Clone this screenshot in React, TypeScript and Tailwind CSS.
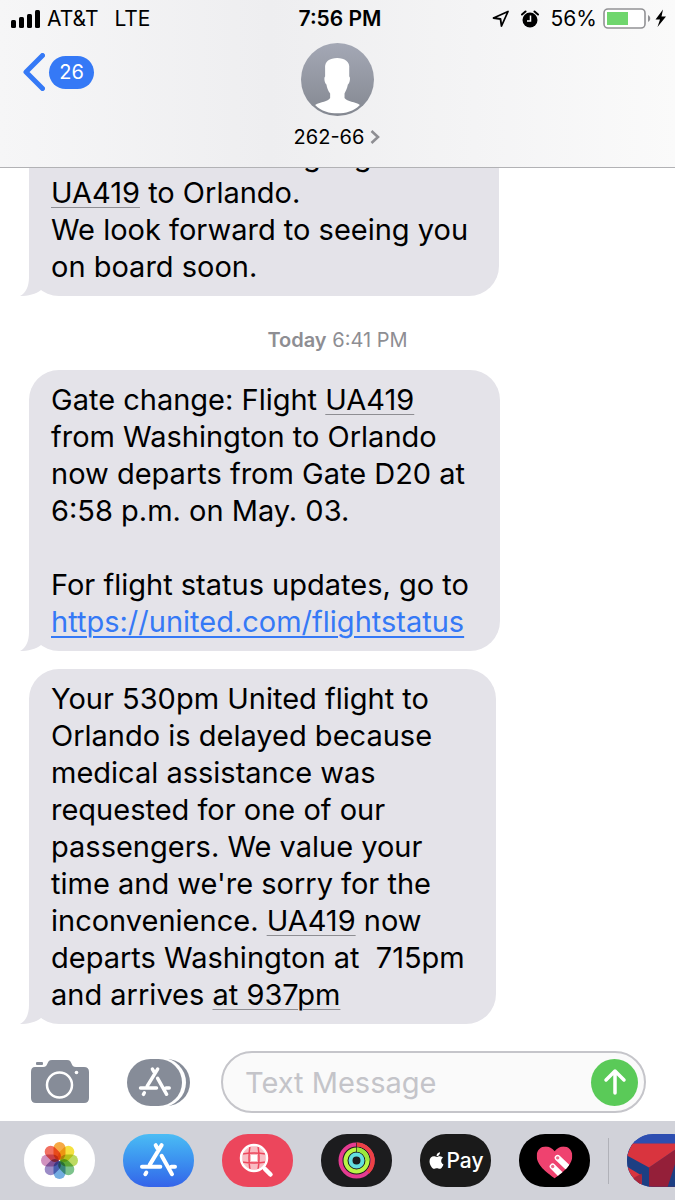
import type { ReactNode } from "react";
import { FaApple } from "react-icons/fa";

const petals = [
  "#f59a23",
  "#f3dc1f",
  "#b0d346",
  "#66b978",
  "#5b9fdc",
  "#8a78bd",
  "#c97fb4",
  "#ee5745",
];

function StatusBar() {
  return (
    <div className="grid h-[37px] grid-cols-[1fr_auto_1fr] items-center pr-1.5 pl-[11px] text-[21px] leading-6">
      <div className="flex items-center">
        <svg width="30" height="18" viewBox="0 0 30 18" aria-hidden="true">
          <rect x="0" y="10" width="5" height="8" rx="1.5" />
          <rect x="8" y="7" width="5" height="11" rx="1.5" />
          <rect x="16" y="4" width="5" height="14" rx="1.5" />
          <rect x="24" y="0" width="5" height="18" rx="1.5" />
        </svg>
        <span className="ml-1.5">AT&amp;T</span>
        <span className="ml-4">LTE</span>
      </div>
      <div className="font-semibold">7:56 PM</div>
      <div className="flex items-center justify-end">
        <svg width="18" height="18" viewBox="0 0 18 18" aria-hidden="true">
          <path
            d="M1.5 8 16 1.5 9.5 16 8.5 9Z"
            fill="none"
            stroke="black"
            strokeWidth="1.8"
            strokeLinejoin="round"
          />
        </svg>
        <svg
          className="ml-[11px]"
          width="18"
          height="18"
          viewBox="0 0 18 18"
          aria-hidden="true"
        >
          <circle cx="9" cy="10" r="7.5" />
          <path
            d="M1 4.500 4.500 1.500M17 4.500 13.500 1.500"
            stroke="black"
            strokeWidth="2"
            strokeLinecap="round"
          />
          <path d="M9.5 5.5V11H6" fill="none" stroke="white" strokeWidth="1.5" />
        </svg>
        <span className="ml-3">56%</span>
        <svg
          className="ml-1.5"
          width="66"
          height="22"
          viewBox="0 0 66 22"
          aria-hidden="true"
        >
          <rect
            x="1"
            y="1"
            width="41"
            height="19"
            rx="4"
            fill="white"
            stroke="#929295"
            strokeWidth="1.6"
          />
          <rect x="4" y="4" width="21" height="13" fill="#6fd66d" />
          <path d="M45 7C48 8.500 48 12.500 45 14Z" fill="#929295" />
          <path d="M60 1.500 52.500 11.500H57L54.500 19 63 8.500H58.500Z" />
        </svg>
      </div>
    </div>
  );
}

function Header() {
  return (
    <header className="border-b border-[#b2b2b5] bg-linear-to-r from-[#f6f6f7] via-[#eeeef0] via-40% to-[#fafafa]">
      <StatusBar />
      <div className="grid grid-cols-[1fr_auto_1fr] items-start px-[23px] pt-1.5 pb-[18px]">
        <button
          type="button"
          aria-label="Back, 26 unread"
          className="mt-2.5 flex w-fit items-center gap-1 text-xl text-white"
        >
          <svg width="22" height="38" viewBox="0 0 22 38" aria-hidden="true">
            <path
              d="M19.500 2.500 3 19 19.500 35.500"
              fill="none"
              stroke="#3579f6"
              strokeWidth="5"
              strokeLinecap="round"
              strokeLinejoin="round"
            />
          </svg>
          <span className="flex h-[33px] w-[45px] items-center justify-center rounded-full bg-[#3579f6]">
            26
          </span>
        </button>
        <button type="button" className="flex flex-col items-center">
          <svg width="73" height="73" viewBox="0 0 218 218" aria-hidden="true">
            <defs>
              <linearGradient id="avatar" x1="0" y1="0" x2="0" y2="1">
                <stop offset="0" stopColor="#a4a8b5" />
                <stop offset="1" stopColor="#848891" />
              </linearGradient>
            </defs>
            <circle cx="109" cy="109" r="109" fill="url(#avatar)" />
            <path
              d="M72 76C70 55 86 45 108 45S147 55 144 78V100C149 102 145 122 140 124 138 138 132 145 130 151V164C138 176 162 174 176 185 157 204 133 210 109 210S61 204 42 185C60 174 80 176 87 164V151C80 143 77 130 76 124 70 120 68 102 72 100Z"
              fill="white"
            />
          </svg>
          <span className="mt-[9px] flex items-center gap-1.5 text-xl leading-6">
            262-66
            <svg width="11" height="14" viewBox="0 0 11 14" aria-hidden="true">
              <path
                d="M1.500 1 8 7 1.500 13"
                fill="none"
                stroke="#8e8e93"
                strokeWidth="2.600"
              />
            </svg>
          </span>
        </button>
      </div>
    </header>
  );
}

function Bubble({ children }: { children: ReactNode }) {
  return (
    <div className="relative w-fit rounded-[30px] bg-[#e4e3e9] py-[11px] pr-[31px] pl-[22px]">
      <svg
        className="absolute bottom-0 -left-[9px]"
        width="30"
        height="30"
        viewBox="0 0 30 30"
        aria-hidden="true"
      >
        <path d="M9 0V11C9 20 6 27 0 30 8 30 16 28 21 24L30 12V0Z" fill="#e4e3e9" />
      </svg>
      <p className="relative whitespace-pre">{children}</p>
    </div>
  );
}

function Detected({ children }: { children: ReactNode }) {
  return (
    <span className="underline decoration-[#8e8e93] decoration-1 underline-offset-4">
      {children}
    </span>
  );
}

function StoreGlyph() {
  return (
    <g fill="none" stroke="white" strokeWidth="12" strokeLinecap="round">
      <path d="M116 33 80 92M98 33 103 42M116 65 147 120M57 98H112M145 98H156M70 115 67 120" />
    </g>
  );
}

function DrawerIcon({ label, children }: { label: string; children: ReactNode }) {
  return (
    <button
      type="button"
      aria-label={label}
      className="h-[53px] w-[71px] shrink-0 overflow-hidden rounded-[26px]"
    >
      {children}
    </button>
  );
}

function AppDrawer() {
  return (
    <nav
      aria-label="Message apps"
      className="flex h-[79px] items-center gap-7 overflow-hidden bg-[#d1d2d9] pl-6"
    >
      <DrawerIcon label="Photos">
        <svg className="isolate size-full bg-white" viewBox="0 0 71 53">
          {petals.map((color, i) => (
            <rect
              key={color}
              className="mix-blend-multiply"
              x="29.500"
              y="8"
              width="12"
              height="18"
              rx="6"
              fill={color}
              fillOpacity="0.85"
              transform={`rotate(${i * 45} 35.5 26.5)`}
            />
          ))}
        </svg>
      </DrawerIcon>
      <DrawerIcon label="App Store">
        <svg
          className="size-full bg-linear-to-b from-[#4bbcf4] to-[#3563e9]"
          viewBox="0 0 213 158"
        >
          <StoreGlyph />
        </svg>
      </DrawerIcon>
      <DrawerIcon label="Image search">
        <svg className="size-full bg-[#ec465c]" viewBox="0 0 71 53">
          <circle cx="32" cy="24" r="12" fill="#f9bcc3" />
          <path d="M29 21H35V27H29Z" fill="white" />
          <path
            d="M20 20Q32 18 44 20M20 28Q32 30 44 28M28 12Q26 24 28 36M36 12Q38 24 36 36"
            fill="none"
            stroke="#ec465c"
            strokeWidth="1.5"
          />
          <circle cx="32" cy="24" r="13" fill="none" stroke="white" strokeWidth="2.5" />
          <path d="m42 34 1 1" stroke="white" strokeWidth="2.500" />
          <path
            d="m43 35 5.500 5.500"
            stroke="white"
            strokeWidth="4.500"
            strokeLinecap="round"
          />
        </svg>
      </DrawerIcon>
      <DrawerIcon label="Activity">
        <svg className="size-full bg-[#1c1c1e]" viewBox="0 0 71 53">
          <g fill="none" strokeWidth="4">
            <circle cx="35.5" cy="26.5" r="16" stroke="#e63b91" />
            <path d="M35.500 10.500A16 16 0 0 1 47 38" stroke="#ec4145" />
            <circle cx="35.500" cy="26.500" r="11" stroke="#b9f545" />
            <path d="M35.500 15.500A11 11 0 0 1 46.500 26.500" stroke="#9be83d" />
            <circle cx="35.500" cy="26.500" r="6" stroke="#62dfe0" />
            <path d="M35.500 8.500V18.500" stroke="#1c1c1e" strokeWidth="0.700" />
          </g>
        </svg>
      </DrawerIcon>
      <DrawerIcon label="Apple Pay">
        <span className="flex size-full items-center justify-center bg-[#1a1a1a] text-[21px] font-medium text-white">
          <FaApple className="size-[19px]" />
          Pay
        </span>
      </DrawerIcon>
      <DrawerIcon label="Digital Touch">
        <svg className="size-full bg-black" viewBox="0 0 213 158">
          <defs>
            <clipPath id="heart">
              <path d="M107 133C92 120 53 98 53 65 53 34 90 27 107 51 124 27 160 34 160 65 160 98 122 120 107 133Z" />
            </clipPath>
          </defs>
          <g clipPath="url(#heart)">
            <path d="M50 30H165V140H50Z" fill="#ef426f" />
            <g stroke="white" strokeWidth="18" strokeLinecap="round">
              <path d="m116 71 45 43M101 97l40 40" />
            </g>
            <g fill="#ef6a8c">
              <circle cx="116" cy="71" r="5" />
              <circle cx="101" cy="97" r="5" />
            </g>
          </g>
        </svg>
      </DrawerIcon>
      <div className="-mx-2.5 h-[46px] w-px shrink-0 bg-[#b0b1b8]" />
      <DrawerIcon label="Games">
        <svg className="size-full bg-[#2d4eb1]" viewBox="0 0 213 158">
          <path d="M0 28H213V158H0Z" fill="#1d3f83" />
          <path d="M66 100 213 0V158H66Z" fill="#941f39" />
          <path d="M0 28H213V0H0Z" fill="#2d4eb1" />
          <path d="M14 28H172L66 100 0 64Z" fill="#d9343e" />
          <path d="M144 90V158H122Z" fill="#1d3f83" />
          <path d="M0 98 44 124V158H0Z" fill="#d9343e" />
          <path d="M18 132 44 118V158Z" fill="#a9263b" />
        </svg>
      </DrawerIcon>
    </nav>
  );
}

function Composer() {
  return (
    <form className="flex items-center pt-[27px] pr-[29px] pb-2 pl-[31px]">
      <button type="button" aria-label="Camera" className="shrink-0">
        <svg width="58" height="44" viewBox="0 0 58 44">
          <path
            d="M4 7H12C18 7 15 0 21 0H36C42 0 39 7 45 7H53Q58 7 58 12V38Q58 43 53 43H5Q0 43 0 38V12Q0 7 4 7Z"
            fill="#868c98"
          />
          <rect x="5" y="2" width="7" height="3" rx="1" fill="#868c98" />
          <circle cx="28.5" cy="25" r="12.500" fill="none" stroke="white" strokeWidth="2.500" />
          <circle cx="45.500" cy="12.500" r="1.800" fill="white" />
        </svg>
      </button>
      <button type="button" aria-label="Apps" className="ml-[38px] shrink-0">
        <svg width="63" height="47" viewBox="0 0 63 47">
          <rect x="8" width="55" height="47" rx="23.500" fill="#868c98" />
          <rect x="0" y="-1" width="59" height="49" rx="24.500" fill="white" />
          <rect width="55" height="47" rx="23.500" fill="#868c98" />
          <g transform="translate(-3 0.500) scale(0.290)">
            <StoreGlyph />
          </g>
        </svg>
      </button>
      <div className="ml-[31px] flex h-[62px] min-w-0 flex-1 items-center rounded-full border-2 border-[#c5c5ca] bg-[#fafafa] pr-1.5 pl-[22px]">
        <input
          type="text"
          aria-label="Text Message"
          placeholder="Text Message"
          className="w-0 min-w-0 flex-1 bg-transparent outline-none placeholder:text-[#c4c4c9]"
        />
        <button
          type="submit"
          aria-label="Send"
          className="flex size-[47px] shrink-0 items-center justify-center rounded-full bg-[#5aca58]"
        >
          <svg width="24" height="28" viewBox="0 0 24 28">
            <path
              d="M12 25V3M3 12 12 3 21 12"
              fill="none"
              stroke="white"
              strokeWidth="3.500"
              strokeLinecap="round"
              strokeLinejoin="round"
            />
          </svg>
        </button>
      </div>
    </form>
  );
}

export default function App() {
  return (
    <div className="flex min-h-screen flex-col bg-white font-['Inter','Liberation_Sans',sans-serif] text-[29px] leading-[37px] text-black">
      <Header />
      <main className="flex-1 overflow-hidden px-[29px]">
        <div className="-mt-[42px]">
          <Bubble>
            We will be boarding flight{"\n"}
            <Detected>UA419</Detected> to Orlando.{"\n"}
            We look forward to seeing you{"\n"}
            on board soon.
          </Bubble>
        </div>
        <p className="mt-8 mb-[18px] text-center text-xl leading-6 text-[#8e8e93]">
          <span className="font-semibold">Today</span> 6:41 PM
        </p>
        <div className="space-y-[18px]">
          <Bubble>
            Gate change: Flight <Detected>UA419</Detected>
            {"\n"}
            from Washington to Orlando{"\n"}
            now departs from Gate D20 at{"\n"}
            6:58 p.m. on May. 03.{"\n\n"}
            For flight status updates, go to{"\n"}
            <a
              href="https://united.com/flightstatus"
              className="text-[#3579f6] underline decoration-2 underline-offset-4"
            >
              https://united.com/flightstatus
            </a>
          </Bubble>
          <Bubble>
            Your 530pm United flight to{"\n"}
            Orlando is delayed because{"\n"}
            medical assistance was{"\n"}
            requested for one of our{"\n"}
            passengers. We value your{"\n"}
            time and we're sorry for the{"\n"}
            inconvenience. <Detected>UA419</Detected> now{"\n"}
            departs Washington at{"  "}715pm{"\n"}
            and arrives <Detected>at 937pm</Detected>
          </Bubble>
        </div>
      </main>
      <Composer />
      <AppDrawer />
    </div>
  );
}
